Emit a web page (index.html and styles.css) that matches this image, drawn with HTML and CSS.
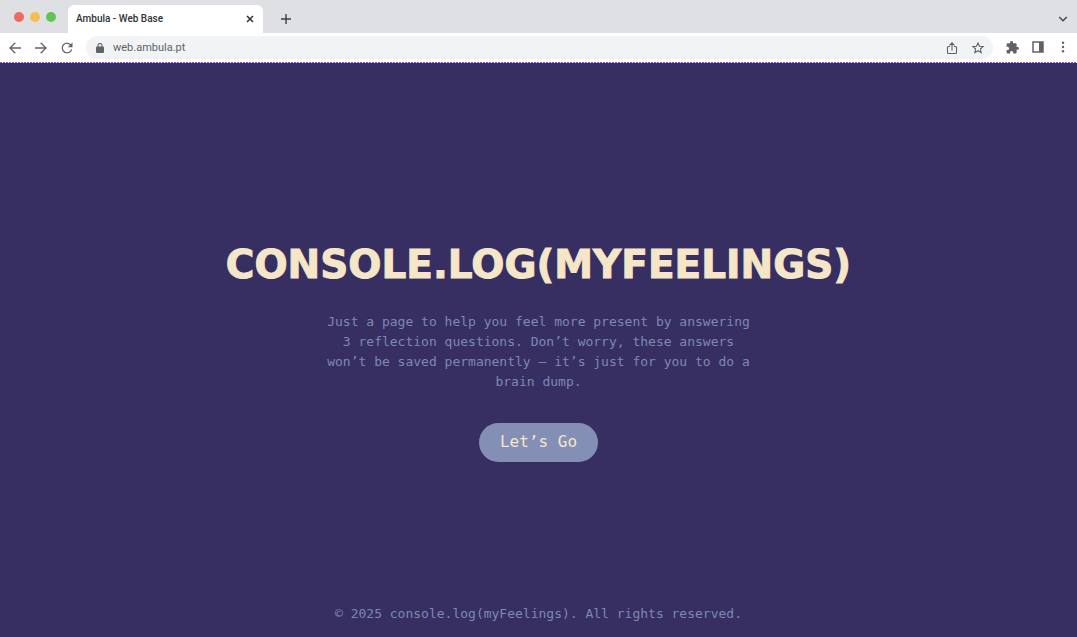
FILE: index.html
```html
<!DOCTYPE html>
<html lang="en">
<head>
<meta charset="utf-8">
<title>Ambula - Web Base</title>
<link rel="stylesheet" href="styles.css">
</head>
<body>
<header class="browser">
  <div class="tabs">
    <div class="lights"><span class="light red"></span><span class="light yellow"></span><span class="light green"></span></div>
    <div class="tab">
      <span class="tab-title">Ambula - Web Base</span>
      <button class="icon-button" aria-label="Close tab"><svg width="8" height="8" viewBox="0 0 8 8"><path d="M1 1l6 6M7 1L1 7" stroke="#303236" stroke-width="1.5"/></svg></button>
    </div>
    <button class="icon-button new-tab" aria-label="New tab"><svg width="10" height="10" viewBox="0 0 10 10"><path d="M5 0v10M0 5h10" stroke="#3c4043" stroke-width="1.4"/></svg></button>
    <button class="icon-button tab-menu" aria-label="Search tabs"><svg width="10" height="8" viewBox="0 0 10 8"><path d="M1.2 2L5 5.8 8.8 2" fill="none" stroke="#46494d" stroke-width="1.5"/></svg></button>
  </div>
  <div class="toolbar">
    <div class="nav">
      <button class="icon-button" aria-label="Back"><svg width="12" height="12" viewBox="0 0 12 12"><path d="M12 6H1M6.3.7L1 6l5.300 5.300" fill="none" stroke="#5f6368" stroke-width="1.300"/></svg></button>
      <button class="icon-button" aria-label="Forward"><svg width="12" height="12" viewBox="0 0 12 12"><path d="M0 6h11M5.700.7L11 6l-5.300 5.300" fill="none" stroke="#5f6368" stroke-width="1.300"/></svg></button>
      <button class="icon-button" aria-label="Reload"><svg width="12" height="12" viewBox="0 0 12 12"><path d="M10.300 3.700A4.800 4.800 0 1 0 10.700 7.400" fill="none" stroke="#5f6368" stroke-width="1.300"/><path d="M11.500.5v4.700H6.800z" fill="#5f6368"/></svg></button>
    </div>
    <div class="address">
      <svg width="8" height="10" viewBox="0 0 8 10"><rect y="3.500" width="8" height="6.500" rx="1" fill="#5f6368"/><path d="M2 4V2.500a2 2 0 0 1 4 0V4" fill="none" stroke="#5f6368" stroke-width="1.100"/></svg>
      <input class="url" type="text" value="web.ambula.pt" aria-label="Address">
      <button class="icon-button" aria-label="Share"><svg width="12" height="12" viewBox="0 0 12 12"><path d="M4 4.500H2.500a1 1 0 0 0-1 1v5a1 1 0 0 0 1 1h7a1 1 0 0 0 1-1v-5a1 1 0 0 0-1-1H8M6 8.500V1M3.500 3.300L6 .8l2.500 2.500" fill="none" stroke="#5f6368" stroke-width="1.100"/></svg></button>
      <button class="icon-button" aria-label="Bookmark"><svg width="12" height="12" viewBox="0 0 12 12"><path d="M6 1l1.500 3.300 3.600.3-2.700 2.400.8 3.600L6 8.700l-3.200 1.900.8-3.600L.9 4.600l3.600-.3z" fill="none" stroke="#5f6368" stroke-width="1.100"/></svg></button>
    </div>
    <div class="actions">
      <button class="icon-button" aria-label="Extensions"><svg width="13" height="13" viewBox="1 1 22 22"><path fill="#5f6368" d="M20.500 11H19V7a2 2 0 0 0-2-2h-4V3.500a2.500 2.500 0 0 0-5 0V5H4a2 2 0 0 0-2 2v3.800h1.500a2.700 2.700 0 0 1 0 5.400H2V20a2 2 0 0 0 2 2h3.800v-1.500a2.700 2.700 0 0 1 5.400 0V22H17a2 2 0 0 0 2-2v-4h1.500a2.500 2.500 0 0 0 0-5z"/></svg></button>
      <button class="icon-button" aria-label="Side panel"><svg width="12" height="12" viewBox="0 0 12 12"><path d="M1 1h10v10H1z" fill="none" stroke="#5f6368" stroke-width="1.500"/><path d="M7 1h4v10H7z" fill="#5f6368"/></svg></button>
      <button class="icon-button" aria-label="Menu"><svg width="12" height="12" viewBox="0 0 12 12"><g fill="#5f6368"><circle cx="6" cy="1.700" r="1.200"/><circle cx="6" cy="6" r="1.200"/><circle cx="6" cy="10.300" r="1.200"/></g></svg></button>
    </div>
  </div>
</header>
<main class="hero">
  <h1 class="title">CONSOLE.LOG(MYFEELINGS)</h1>
  <p class="intro">Just a page to help you feel more present by answering 3 reflection questions. Don’t worry, these answers won’t be saved permanently – it’s just for you to do a brain dump.</p>
  <button class="start">Let’s Go</button>
</main>
<footer class="footer">© 2025 console.log(myFeelings). All rights reserved.</footer>
</body>
</html>
```

FILE: styles.css
```css
* { box-sizing: border-box; }

body {
  margin: 0;
  min-height: 100vh;
  display: flex;
  flex-direction: column;
  background: #372f62;
  color: #7d89b3;
  font-family: "DejaVu Sans Mono", monospace;
  font-size: 13px;
  line-height: 20px;
}

.browser { font-family: Roboto, sans-serif; background: #fff; }

.tabs {
  display: flex;
  align-items: center;
  height: 33px;
  padding: 0 9px 0 14px;
  background: #dfe0e4;
}

.lights { display: flex; gap: 6px; margin-right: 12px; }
.light { width: 10px; height: 10px; border-radius: 50%; }
.red { background: #ed6a5e; }
.yellow { background: #f5bf4f; }
.green { background: #61c554; }

.tab {
  display: flex;
  align-items: center;
  justify-content: space-between;
  align-self: flex-end;
  width: 195px;
  height: 28px;
  padding: 0 9px 1px 8px;
  border-radius: 6px 6px 0 0;
  background: #fff;
}
.tab-title { font-size: 10px; font-weight: 500; color: #303236; }

.icon-button { display: flex; padding: 0; border: 0; background: none; }
.new-tab { margin: 4px 0 0 18px; }
.tab-menu { margin: 4px 0 0 auto; }

.toolbar {
  display: flex;
  align-items: center;
  gap: 13px;
  height: 30px;
  padding: 0 8px 1px 9px;
  background: repeating-linear-gradient(90deg, #9747ff 0 2px, #fff 2px 3px) bottom / 100% 1px no-repeat #fff;
}
.nav { display: flex; gap: 14px; }
.actions { display: flex; gap: 13px; }

.address {
  flex: 1;
  display: flex;
  align-items: center;
  gap: 14px;
  height: 23px;
  padding: 0 9px 0 10px;
  border-radius: 12px;
  background: #f1f3f4;
}
.url {
  flex: 1;
  min-width: 0;
  margin-left: -5px;
  padding: 0;
  border: 0;
  background: none;
  color: #5f6368;
  font: 11px Roboto, sans-serif;
}

.hero {
  flex: 1;
  display: flex;
  flex-direction: column;
  align-items: center;
  justify-content: center;
  padding: 36px 16px 0;
  text-align: center;
}
.title {
  margin: 0;
  color: #f5e6c8;
  font: bold 39px/46px "DejaVu Sans", sans-serif;
  -webkit-text-stroke: 1px #f5e6c8;
}
.intro { max-width: 432px; margin: 24px 0 31px; }
.start {
  padding: 8px 21px 9px;
  border: 0;
  border-radius: 20px;
  background: #838fb5;
  color: #f5e6c8;
  font: 16px/22px "DejaVu Sans Mono", monospace;
}
.footer { padding: 0 16px 13px; text-align: center; }
```
